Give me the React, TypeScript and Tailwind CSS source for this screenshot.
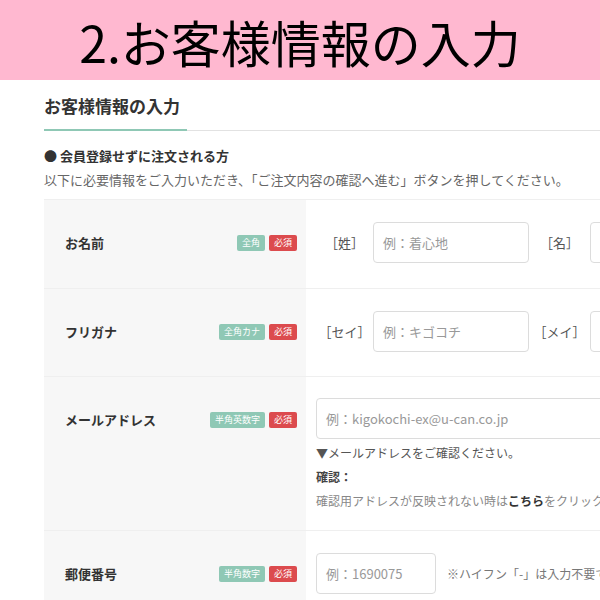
import React from "react";

const FONT = { fontFamily: '"Noto Sans CJK JP", "Noto Sans", sans-serif' };

function Badge({ text, color }: { text: string; color: "green" | "red" }) {
  return (
    <span
      className={
        "inline-block h-[16px] rounded-[2px] px-[5px] text-[9px] leading-[16px] text-white " +
        (color === "green" ? "bg-[#8fc8b5]" : "bg-[#dc4b4e]")
      }
    >
      {text}
    </span>
  );
}

function LabelCell({ label, tag }: { label: string; tag: string }) {
  return (
    <div className="w-[262px] shrink-0 bg-[#f7f7f7] pl-[21px] pr-[9px] pt-[22px]">
      <div className="flex h-[41px] items-center justify-between">
        <span className="text-[13px] font-bold text-[#333]">{label}</span>
        <div className="flex gap-[4px]">
          <Badge text={tag} color="green" />
          <Badge text="必須" color="red" />
        </div>
      </div>
    </div>
  );
}

function Input({ placeholder, w }: { placeholder: string; w: string }) {
  return (
    <div
      className={
        "flex h-[41px] shrink-0 items-center rounded-[4px] border border-[#dcdcdc] bg-white pl-[9px] text-[13px] text-[#999] " +
        w
      }
    >
      {placeholder}
    </div>
  );
}

export default function App() {
  return (
    <div className="h-[600px] w-[600px] overflow-hidden bg-white" style={FONT}>
      <div className="flex h-[80px] items-center justify-center bg-[#ffb8d0]">
        <h1 className="pt-[2px] text-[50px] font-normal leading-none text-black">
          2.お客様情報の入力
        </h1>
      </div>

      <div className="pl-[44px]">
        <h2 className="pt-[14px] text-[17px] font-bold leading-[24px] text-[#333]">
          お客様情報の入力
        </h2>
        <div className="mt-[11px] flex items-center">
          <div className="h-[2px] w-[143px] bg-[#8fc8b5]" />
          <div className="h-px flex-1 bg-[#e2e2e2]" />
        </div>
        <p className="mt-[15px] text-[13px] font-bold leading-[20px] text-[#333]">
          ● 会員登録せずに注文される方
        </p>
        <p className="mt-[4px] whitespace-nowrap text-[13px] leading-[20px] text-[#666]">
          以下に必要情報をご入力いただき、「ご注文内容の確認へ進む」ボタンを押してください。
        </p>

        <div className="mt-[9px] w-[700px] border-t border-[#efefef]">
          {/* row 1 */}
          <div className="flex h-[89px] border-b border-[#efefef]">
            <LabelCell label="お名前" tag="全角" />
            <div className="flex items-start pl-[10px] pt-[22px]">
              <div className="flex h-[41px] items-center">
                <span className="w-[57px] text-center text-[13px] text-[#555]">［姓］</span>
                <Input placeholder="例：着心地" w="w-[156px]" />
                <span className="w-[61px] text-center text-[13px] text-[#555]">［名］</span>
                <Input placeholder="例：太郎" w="w-[156px]" />
              </div>
            </div>
          </div>
          {/* row 2 */}
          <div className="flex h-[88px] border-b border-[#efefef]">
            <LabelCell label="フリガナ" tag="全角カナ" />
            <div className="flex items-start pl-[10px] pt-[22px]">
              <div className="flex h-[41px] items-center">
                <span className="w-[57px] text-center text-[13px] text-[#555]">［セイ］</span>
                <Input placeholder="例：キゴコチ" w="w-[156px]" />
                <span className="w-[61px] text-center text-[13px] text-[#555]">［メイ］</span>
                <Input placeholder="例：タロウ" w="w-[156px]" />
              </div>
            </div>
          </div>
          {/* row 3 */}
          <div className="flex h-[154px] border-b border-[#efefef]">
            <LabelCell label="メールアドレス" tag="半角英数字" />
            <div className="pl-[10px] pt-[21px]">
              <Input placeholder="例：kigokochi-ex@u-can.co.jp" w="w-[400px]" />
              <div className="mt-[2px] whitespace-nowrap text-[12px] leading-[24px]">
                <p className="text-[#555]">▼メールアドレスをご確認ください。</p>
                <p className="font-bold text-[#444]">確認：</p>
                <p className="text-[#888]">
                  確認用アドレスが反映されない時は
                  <span className="font-bold text-[#333]">こちら</span>
                  をクリックしてください。
                </p>
              </div>
            </div>
          </div>
          {/* row 4 */}
          <div className="flex h-[100px]">
            <LabelCell label="郵便番号" tag="半角数字" />
            <div className="pl-[10px] pt-[22px]">
              <div className="flex h-[41px] items-center">
                <Input placeholder="例：1690075" w="w-[120px]" />
                <span className="ml-[11px] whitespace-nowrap text-[12px] text-[#777]">
                  ※ハイフン「-」は入力不要です。
                </span>
              </div>
            </div>
          </div>
        </div>
      </div>
    </div>
  );
}
